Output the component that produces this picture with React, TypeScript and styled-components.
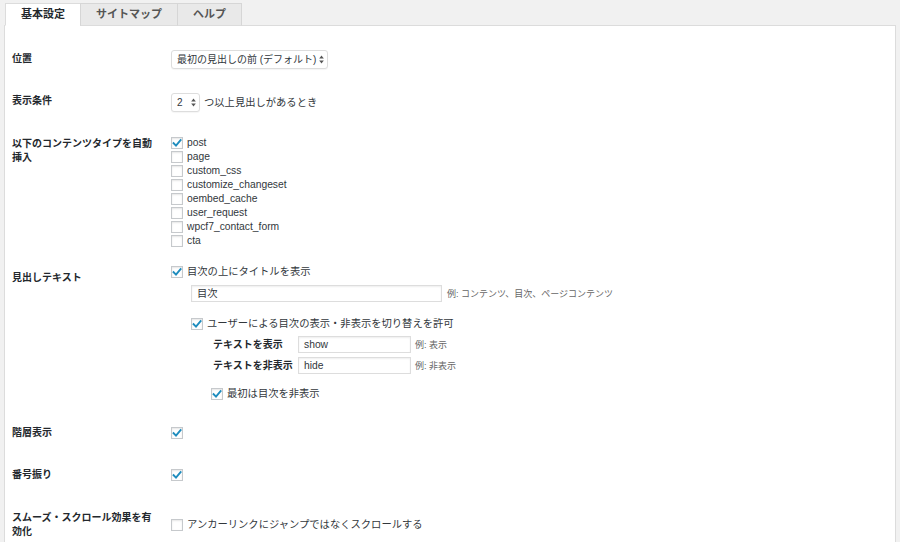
import React from "react";
import styled, { createGlobalStyle } from "styled-components";

const Global = createGlobalStyle`
  html, body { margin: 0; padding: 0; background: #f1f1f1; }
  body { font-family: "Liberation Sans", "Noto Sans CJK JP", sans-serif; color: #444; }
  * { box-sizing: border-box; }
`;

const Page = styled.div`
  padding: 3px 4px 0 4px;
  height: 542px;
  overflow: hidden;
`;

const TabBar = styled.div`
  display: flex;
  padding-left: 1px;
  position: relative;
  z-index: 1;
`;

const Tab = styled.div<{ $active?: boolean }>`
  height: 23px;
  padding: 0 15px;
  margin-left: -1px;
  margin-bottom: -1px;
  border: 1px solid ${(p) => (p.$active ? "#dcdcdc" : "#d6d6d6")};
  border-bottom: ${(p) => (p.$active ? "1px solid #fff" : "1px solid #dcdcdc")};
  background: ${(p) => (p.$active ? "#fff" : "#e9e9e9")};
  font-size: 11px;
  font-weight: bold;
  line-height: 21px;
  color: ${(p) => (p.$active ? "#23282d" : "#555")};
  &:first-child { margin-left: 0; }
`;

const Panel = styled.div`
  background: #fff;
  border: 1px solid #dcdcdc;
  padding: 12px 0 0 7px;
  min-height: 600px;
`;

const Row = styled.div<{ $pt: number; $lpt: number; $pb: number }>`
  display: flex;
  align-items: flex-start;
  padding-bottom: ${(p) => p.$pb}px;
  & > .label { padding-top: ${(p) => p.$lpt}px; }
  & > .content { padding-top: ${(p) => p.$pt}px; }
`;

const Label = styled.div`
  width: 159px;
  flex: none;
  font-size: 10px;
  line-height: 14px;
  font-weight: bold;
  color: #23282d;
  padding-right: 16px;
`;

const Content = styled.div`
  display: flex;
  flex-direction: column;
  align-items: flex-start;
  font-size: 10.3px;
  line-height: 14px;
  color: #32373c;
`;

const Inline = styled.div<{ $gap?: number }>`
  display: flex;
  align-items: center;
  gap: ${(p) => p.$gap ?? 4}px;
`;

const SelectBox = styled.div<{ $w: number }>`
  width: ${(p) => p.$w}px;
  height: 19px;
  border: 1px solid #ddd;
  border-radius: 3px;
  box-shadow: 0 1px 1px rgba(0, 0, 0, 0.04);
  background: #fff;
  display: flex;
  align-items: center;
  justify-content: space-between;
  padding: 0 3px 0 5px;
  font-size: 10px;
  color: #32373c;
`;

const CheckList = styled.div`
  display: flex;
  flex-direction: column;
`;

const CheckLine = styled.label<{ $indent?: number }>`
  display: flex;
  align-items: center;
  height: 14px;
  gap: 4px;
  margin-left: ${(p) => p.$indent ?? 0}px;
  color: #32373c;
`;

const Box = styled.span`
  width: 12px;
  height: 12px;
  flex: none;
  border: 1px solid #c6c9cc;
  background: #fff;
  box-shadow: inset 0 1px 2px rgba(0, 0, 0, 0.1);
  display: flex;
  align-items: center;
  justify-content: center;
`;

const TextInput = styled.div<{ $w: number }>`
  width: ${(p) => p.$w}px;
  height: 17px;
  border: 1px solid #ddd;
  box-shadow: inset 0 1px 2px rgba(0, 0, 0, 0.07);
  background: #fff;
  padding: 0 5px;
  font-size: 10.3px;
  line-height: 15px;
  color: #32373c;
`;

const Desc = styled.span`
  font-size: 9px;
  color: #666;
`;

const TitleInputLine = styled(Inline)`
  margin: 6px 0 0 20px;
  gap: 5px;
`;

const SubTable = styled.div`
  display: flex;
  flex-direction: column;
  gap: 4px;
  margin: 5px 0 0 42px;
`;

const SubRow = styled.div`
  display: flex;
  align-items: center;
  gap: 4px;
`;

const SubLabel = styled.span`
  width: 81px;
  font-size: 10px;
  font-weight: bold;
  color: #23282d;
`;

const Spacer = styled.div<{ $h: number }>`
  height: ${(p) => p.$h}px;
`;

const Check = ({ on }: { on?: boolean }) => (
  <Box>
    {on && (
      <svg width="10" height="10" viewBox="0 0 10 10">
        <path d="M1.6 5.2 L4 7.6 L8.6 2.2" fill="none" stroke="#1e8cbe" strokeWidth="1.9" strokeLinecap="square" />
      </svg>
    )}
  </Box>
);

const Arrows = () => (
  <svg width="5" height="9" viewBox="0 0 5 9">
    <path d="M2.5 0.5 L4.8 3.6 L0.2 3.6 Z" fill="#555" />
    <path d="M2.5 8.5 L4.8 5.4 L0.2 5.4 Z" fill="#555" />
  </svg>
);

const types = [
  ["post", true],
  ["page", false],
  ["custom_css", false],
  ["customize_changeset", false],
  ["oembed_cache", false],
  ["user_request", false],
  ["wpcf7_contact_form", false],
  ["cta", false],
] as const;

export default function App() {
  return (
    <>
      <Global />
      <Page>
        <TabBar>
          <Tab $active>基本設定</Tab>
          <Tab>サイトマップ</Tab>
          <Tab>ヘルプ</Tab>
        </TabBar>
        <Panel>
          <Row $pt={12} $lpt={14} $pb={12}>
            <Label className="label">位置</Label>
            <Content className="content">
              <SelectBox $w={157}>
                <span>最初の見出しの前 (デフォルト)</span>
                <Arrows />
              </SelectBox>
            </Content>
          </Row>

          <Row $pt={12} $lpt={13} $pb={12}>
            <Label className="label">表示条件</Label>
            <Content className="content">
              <Inline>
                <SelectBox $w={29}>
                  <span>2</span>
                  <Arrows />
                </SelectBox>
                <span>つ以上見出しがあるとき</span>
              </Inline>
            </Content>
          </Row>

          <Row $pt={12} $lpt={13} $pb={12}>
            <Label className="label">以下のコンテンツタイプを自動挿入</Label>
            <Content className="content">
              <CheckList>
                {types.map(([name, on]) => (
                  <CheckLine key={name}>
                    <Check on={on} />
                    <span>{name}</span>
                  </CheckLine>
                ))}
              </CheckList>
            </Content>
          </Row>

          <Row $pt={5} $lpt={11} $pb={12}>
            <Label className="label">見出しテキスト</Label>
            <Content className="content">
              <CheckLine>
                <Check on />
                <span>目次の上にタイトルを表示</span>
              </CheckLine>
              <TitleInputLine>
                <TextInput $w={251}>目次</TextInput>
                <Desc>例: コンテンツ、目次、ページコンテンツ</Desc>
              </TitleInputLine>
              <Spacer $h={15} />
              <CheckLine $indent={20}>
                <Check on />
                <span>ユーザーによる目次の表示・非表示を切り替えを許可</span>
              </CheckLine>
              <SubTable>
                <SubRow>
                  <SubLabel>テキストを表示</SubLabel>
                  <TextInput $w={113}>show</TextInput>
                  <Desc>例: 表示</Desc>
                </SubRow>
                <SubRow>
                  <SubLabel>テキストを非表示</SubLabel>
                  <TextInput $w={113}>hide</TextInput>
                  <Desc>例: 非表示</Desc>
                </SubRow>
              </SubTable>
              <Spacer $h={13} />
              <CheckLine $indent={40}>
                <Check on />
                <span>最初は目次を非表示</span>
              </CheckLine>
            </Content>
          </Row>

          <Row $pt={13} $lpt={13} $pb={15}>
            <Label className="label">階層表示</Label>
            <Content className="content">
              <CheckLine>
                <Check on />
              </CheckLine>
            </Content>
          </Row>

          <Row $pt={13} $lpt={13} $pb={15}>
            <Label className="label">番号振り</Label>
            <Content className="content">
              <CheckLine>
                <Check on />
              </CheckLine>
            </Content>
          </Row>

          <Row $pt={21} $lpt={14} $pb={15}>
            <Label className="label">スムーズ・スクロール効果を有効化</Label>
            <Content className="content">
              <CheckLine>
                <Check />
                <span>アンカーリンクにジャンプではなくスクロールする</span>
              </CheckLine>
            </Content>
          </Row>
        </Panel>
      </Page>
    </>
  );
}
